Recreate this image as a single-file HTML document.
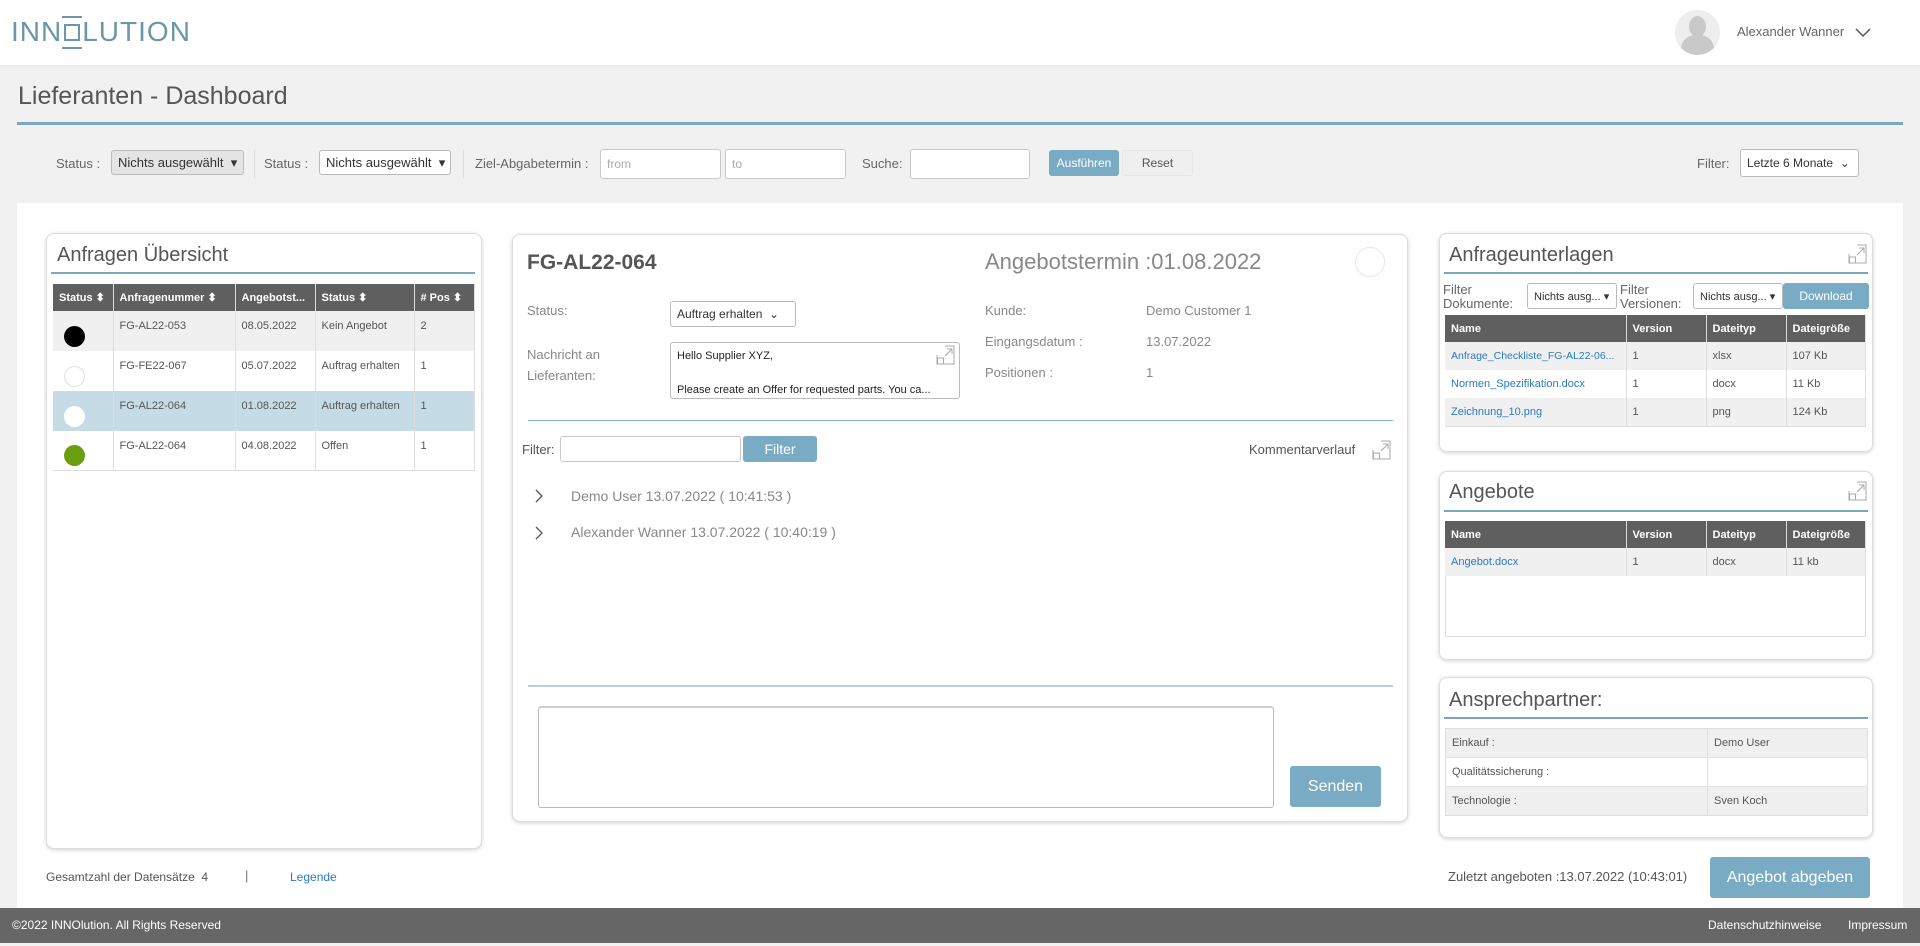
<!DOCTYPE html>
<html><head><meta charset="utf-8"><style>
*{box-sizing:border-box;margin:0;padding:0}
body{width:1920px;height:946px;background:#f1f1f1;font-family:"Liberation Sans",sans-serif;color:#555;position:relative;overflow:hidden}
.a{position:absolute}
.t{position:absolute;white-space:nowrap;line-height:1}
.panel{position:absolute;background:#fff;border:1px solid #ddd;border-radius:8px;box-shadow:0 1px 4px rgba(0,0,0,.18)}
.sel{position:absolute;background:#fff;border:1px solid #bbb;border-radius:3px;font-size:13px;color:#333;padding:0 6px;display:flex;align-items:center;white-space:nowrap}
.inp{position:absolute;background:#fff;border:1px solid #c8c8c8;border-radius:3px;font-size:12px;color:#aaa;padding:0 6px;display:flex;align-items:center}
.btn{position:absolute;background:#7aabc4;color:#fff;border-radius:3px;display:flex;align-items:center;justify-content:center;white-space:nowrap}
table{position:absolute;border-collapse:collapse;font-size:11px;table-layout:fixed}
th{background:#5f5f5f;color:#fff;text-align:left;font-weight:bold;padding:0 6px;border-right:1px solid #ddd;height:27px;white-space:nowrap;overflow:hidden}
td{padding:0 6px;border-right:1px solid #ddd;color:#555;vertical-align:middle;white-space:nowrap;overflow:hidden}
.ln{position:absolute;height:2px;background:#7aa9bd}
.exp{position:absolute;width:20px;height:20px}
a{color:#2a7ac0;text-decoration:none}
</style></head><body>
<div class="a" style="left:0;top:0;width:1920px;height:65px;background:#fff;box-shadow:0 1px 3px rgba(0,0,0,.06)"></div>
<div class="t" style="left:11px;top:18px;font-size:28px;color:#6b97a8;letter-spacing:1px">INN<span style="display:inline-block;width:16px;height:17px;border:2px solid #6b97a8;margin:0 2px;vertical-align:0px;position:relative"><span style="position:absolute;left:-4px;top:-10px;width:20px;height:33px;border:2px solid #6b97a8;border-left:none;border-right:none"></span></span>LUTION</div>
<div class="a" style="left:1675px;top:10px;width:45px;height:45px;border-radius:50%;background:#eee;overflow:hidden"><div class="a" style="left:14px;top:6px;width:17px;height:21px;border-radius:50%;background:#c9c9c9"></div><div class="a" style="left:6px;top:25px;width:33px;height:30px;border-radius:45% 45% 0 0;background:#c9c9c9"></div></div>
<div class="t" style="left:1737px;top:25px;font-size:13px;color:#666">Alexander Wanner</div>
<svg class="a" style="left:1855px;top:28px" width="16" height="10"><path d="M1 1 L8 8 L15 1" stroke="#555" stroke-width="1.5" fill="none"/></svg>
<div class="t" style="left:18px;top:84px;font-size:25px;color:#555">Lieferanten - Dashboard</div>
<div class="a" style="left:17px;top:122px;width:1886px;height:3px;background:#7aa9bd"></div>
<div class="t" style="left:56px;top:157px;font-size:13px;color:#666">Status :</div>
<div class="sel" style="left:111px;top:150px;width:133px;height:25px;background:#e4e4e4">Nichts ausgewählt &nbsp;▾</div>
<div class="a" style="left:254px;top:150px;width:1px;height:28px;background:#ddd"></div>
<div class="t" style="left:264px;top:157px;font-size:13px;color:#666">Status :</div>
<div class="sel" style="left:319px;top:150px;width:132px;height:25px">Nichts ausgewählt &nbsp;▾</div>
<div class="a" style="left:463px;top:150px;width:1px;height:28px;background:#ddd"></div>
<div class="t" style="left:475px;top:157px;font-size:13px;color:#666">Ziel-Abgabetermin :</div>
<div class="inp" style="left:600px;top:149px;width:121px;height:30px">from</div>
<div class="inp" style="left:725px;top:149px;width:121px;height:30px">to</div>
<div class="t" style="left:862px;top:157px;font-size:13px;color:#666">Suche:</div>
<div class="inp" style="left:910px;top:149px;width:120px;height:30px"></div>
<div class="btn" style="left:1049px;top:150px;width:70px;height:26px;font-size:12px">Ausführen</div>
<div class="a" style="left:1122px;top:150px;width:71px;height:26px;border:1px solid #e6e6e6;border-radius:3px;font-size:12px;color:#555;display:flex;align-items:center;justify-content:center;background:#efefef">Reset</div>
<div class="t" style="left:1697px;top:157px;font-size:13px;color:#666">Filter:</div>
<div class="sel" style="left:1740px;top:149px;width:119px;height:28px;font-size:12px">Letzte 6 Monate &nbsp;⌄</div>
<div class="a" style="left:17px;top:203px;width:1886px;height:705px;background:#fff"></div>

<div class="panel" style="left:46px;top:233px;width:436px;height:616px"></div>
<div class="t" style="left:57px;top:245px;font-size:20px;color:#555">Anfragen Übersicht</div>
<div class="ln" style="left:51px;top:272px;width:424px"></div>
<table style="left:53px;top:284px;width:422px">
<tr><th style="width:60px">Status ⬍</th><th style="width:122px">Anfragenummer ⬍</th><th style="width:80px">Angebotst...</th><th style="width:99px">Status ⬍</th><th>#&nbsp;Pos ⬍</th></tr>
<tr style="background:#f0f0f0;height:40px"><td><div style="width:21px;height:21px;border-radius:50%;background:#000;margin:10px 0 0 5px"></div></td><td style="vertical-align:top;padding-top:9px">FG-AL22-053</td><td style="vertical-align:top;padding-top:9px">08.05.2022</td><td style="vertical-align:top;padding-top:9px">Kein Angebot</td><td style="vertical-align:top;padding-top:9px">2</td></tr>
<tr style="background:#fff;height:40px"><td><div style="width:21px;height:21px;border-radius:50%;border:1px solid #ddd;margin:10px 0 0 5px"></div></td><td style="vertical-align:top;padding-top:9px">FG-FE22-067</td><td style="vertical-align:top;padding-top:9px">05.07.2022</td><td style="vertical-align:top;padding-top:9px">Auftrag erhalten</td><td style="vertical-align:top;padding-top:9px">1</td></tr>
<tr style="background:#c5dce6;height:40px"><td><div style="width:21px;height:21px;border-radius:50%;background:#fff;margin:10px 0 0 5px"></div></td><td style="vertical-align:top;padding-top:9px">FG-AL22-064</td><td style="vertical-align:top;padding-top:9px">01.08.2022</td><td style="vertical-align:top;padding-top:9px">Auftrag erhalten</td><td style="vertical-align:top;padding-top:9px">1</td></tr>
<tr style="background:#fff;height:39px;border-bottom:1px solid #ddd"><td><div style="width:21px;height:21px;border-radius:50%;background:#6a9e10;margin:10px 0 0 5px"></div></td><td style="vertical-align:top;padding-top:9px">FG-AL22-064</td><td style="vertical-align:top;padding-top:9px">04.08.2022</td><td style="vertical-align:top;padding-top:9px">Offen</td><td style="vertical-align:top;padding-top:9px">1</td></tr>
</table>
<div class="t" style="left:46px;top:871px;font-size:12px;color:#555">Gesamtzahl der Datensätze &nbsp;4</div>
<div class="t" style="left:245px;top:869px;font-size:13px;color:#777">|</div>
<div class="t" style="left:290px;top:871px;font-size:12px"><a>Legende</a></div>

<div class="panel" style="left:512px;top:234px;width:896px;height:588px"></div>
<div class="t" style="left:527px;top:252px;font-size:21px;color:#555;font-weight:600">FG-AL22-064</div>
<div class="t" style="left:985px;top:251px;font-size:22px;color:#888">Angebotstermin :01.08.2022</div>
<div class="a" style="left:1355px;top:247px;width:30px;height:30px;border-radius:50%;border:1px solid #e8e8e8"></div>
<div class="t" style="left:527px;top:304px;font-size:13px;color:#888">Status:</div>
<div class="sel" style="left:670px;top:301px;width:126px;height:26px;font-size:12px">Auftrag erhalten &nbsp;⌄</div>
<div class="t" style="left:527px;top:344px;font-size:13px;color:#888;line-height:21px">Nachricht an<br>Lieferanten:</div>
<div class="a" style="left:670px;top:342px;width:290px;height:57px;border:1px solid #bbb;border-radius:3px;font-size:11px;color:#222;padding:5px 6px;line-height:17px;white-space:nowrap">Hello Supplier XYZ,<br><br>Please create an Offer for requested parts. You ca...</div>
<svg class="exp" style="left:936px;top:345px" viewBox="0 0 20 20"><path d="M9 1H18V19H1V10" stroke="#aaa" fill="none"/><rect x="1.5" y="13" width="6" height="6" stroke="#aaa" fill="none"/><path d="M9 11L16 4M11 4H16V9" stroke="#aaa" fill="none"/></svg>
<div class="t" style="left:985px;top:304px;font-size:13px;color:#888">Kunde:</div>
<div class="t" style="left:1146px;top:304px;font-size:13px;color:#888">Demo Customer 1</div>
<div class="t" style="left:985px;top:335px;font-size:13px;color:#888">Eingangsdatum :</div>
<div class="t" style="left:1146px;top:335px;font-size:13px;color:#888">13.07.2022</div>
<div class="t" style="left:985px;top:366px;font-size:13px;color:#888">Positionen :</div>
<div class="t" style="left:1146px;top:366px;font-size:13px;color:#888">1</div>
<div class="a" style="left:528px;top:420px;width:865px;height:1px;background:#8ab5c6"></div>
<div class="t" style="left:522px;top:443px;font-size:13px;color:#555">Filter:</div>
<div class="inp" style="left:560px;top:436px;width:181px;height:26px"></div>
<div class="btn" style="left:743px;top:436px;width:74px;height:26px;font-size:14px">Filter</div>
<div class="t" style="left:1249px;top:443px;font-size:13px;color:#555">Kommentarverlauf</div>
<svg class="exp" style="left:1372px;top:440px" viewBox="0 0 20 20"><path d="M9 1H18V19H1V10" stroke="#aaa" fill="none"/><rect x="1.5" y="13" width="6" height="6" stroke="#aaa" fill="none"/><path d="M9 11L16 4M11 4H16V9" stroke="#aaa" fill="none"/></svg>
<svg class="a" style="left:534px;top:489px" width="10" height="14"><path d="M2 1L8 7L2 13" stroke="#555" stroke-width="1.3" fill="none"/></svg>
<div class="t" style="left:571px;top:489px;font-size:14px;color:#888">Demo User 13.07.2022 ( 10:41:53 )</div>
<svg class="a" style="left:534px;top:526px" width="10" height="14"><path d="M2 1L8 7L2 13" stroke="#555" stroke-width="1.3" fill="none"/></svg>
<div class="t" style="left:571px;top:525px;font-size:14px;color:#888">Alexander Wanner 13.07.2022 ( 10:40:19 )</div>
<div class="a" style="left:528px;top:685px;width:865px;height:2px;background:#b8d0da"></div>
<div class="a" style="left:538px;top:706px;width:736px;height:102px;border:1px solid #bbb;border-top:2px solid #ccc;border-radius:3px"></div>
<div class="btn" style="left:1290px;top:766px;width:91px;height:41px;font-size:16px">Senden</div>

<div class="panel" style="left:1439px;top:233px;width:434px;height:219px"></div>
<div class="t" style="left:1449px;top:245px;font-size:20px;color:#555">Anfrageunterlagen</div>
<svg class="exp" style="left:1848px;top:244px" viewBox="0 0 20 20"><path d="M9 1H18V19H1V10" stroke="#aaa" fill="none"/><rect x="1.5" y="13" width="6" height="6" stroke="#aaa" fill="none"/><path d="M9 11L16 4M11 4H16V9" stroke="#aaa" fill="none"/></svg>
<div class="ln" style="left:1444px;top:272px;width:424px"></div>
<div class="t" style="left:1443px;top:283px;font-size:13px;color:#666;line-height:14px">Filter<br>Dokumente:</div>
<div class="sel" style="left:1527px;top:283px;width:90px;height:26px;font-size:11px">Nichts ausg... ▾</div>
<div class="t" style="left:1620px;top:283px;font-size:13px;color:#666;line-height:14px">Filter<br>Versionen:</div>
<div class="sel" style="left:1693px;top:283px;width:90px;height:26px;font-size:11px">Nichts ausg... ▾</div>
<div class="btn" style="left:1783px;top:283px;width:86px;height:26px;font-size:12px">Download</div>
<table style="left:1445px;top:315px;width:421px">
<tr><th style="width:181px">Name</th><th style="width:80px">Version</th><th style="width:80px">Dateityp</th><th>Dateigröße</th></tr>
<tr style="background:#f0f0f0;height:28px"><td style="font-size:10.5px"><a>Anfrage_Checkliste_FG-AL22-06...</a></td><td>1</td><td>xlsx</td><td>107 Kb</td></tr>
<tr style="background:#fff;height:28px"><td><a>Normen_Spezifikation.docx</a></td><td>1</td><td>docx</td><td>11 Kb</td></tr>
<tr style="background:#f0f0f0;height:28px;border-bottom:1px solid #ddd"><td><a>Zeichnung_10.png</a></td><td>1</td><td>png</td><td>124 Kb</td></tr>
</table>

<div class="panel" style="left:1439px;top:471px;width:434px;height:189px"></div>
<div class="t" style="left:1449px;top:482px;font-size:20px;color:#555">Angebote</div>
<svg class="exp" style="left:1848px;top:481px" viewBox="0 0 20 20"><path d="M9 1H18V19H1V10" stroke="#aaa" fill="none"/><rect x="1.5" y="13" width="6" height="6" stroke="#aaa" fill="none"/><path d="M9 11L16 4M11 4H16V9" stroke="#aaa" fill="none"/></svg>
<div class="ln" style="left:1444px;top:510px;width:424px"></div>
<div class="a" style="left:1445px;top:521px;width:421px;height:116px;border:1px solid #ddd"></div>
<table style="left:1445px;top:521px;width:421px">
<tr><th style="width:181px">Name</th><th style="width:80px">Version</th><th style="width:80px">Dateityp</th><th>Dateigröße</th></tr>
<tr style="background:#f0f0f0;height:28px"><td><a>Angebot.docx</a></td><td>1</td><td>docx</td><td>11 kb</td></tr>
</table>

<div class="panel" style="left:1439px;top:677px;width:434px;height:161px"></div>
<div class="t" style="left:1449px;top:690px;font-size:20px;color:#555">Ansprechpartner:</div>
<div class="ln" style="left:1444px;top:717px;width:424px"></div>
<table style="left:1445px;top:728px;width:423px;border:1px solid #ddd">
<tr style="background:#f0f0f0;height:29px"><td style="width:262px;border-bottom:1px solid #e4e4e4">Einkauf :</td><td style="border-bottom:1px solid #e4e4e4">Demo User</td></tr>
<tr style="background:#fff;height:29px"><td style="border-bottom:1px solid #e4e4e4">Qualitätssicherung :</td><td style="border-bottom:1px solid #e4e4e4"></td></tr>
<tr style="background:#f0f0f0;height:29px"><td>Technologie :</td><td>Sven Koch</td></tr>
</table>
<div class="t" style="left:1448px;top:870px;font-size:13px;color:#555">Zuletzt angeboten :13.07.2022 (10:43:01)</div>
<div class="btn" style="left:1710px;top:857px;width:160px;height:41px;font-size:16px">Angebot abgeben</div>

<div class="a" style="left:0;top:908px;width:1920px;height:35px;background:#666"></div>
<div class="t" style="left:12px;top:919px;font-size:12px;color:#fff">©2022 INNOlution. All Rights Reserved</div>
<div class="t" style="left:1708px;top:919px;font-size:12px;color:#fff">Datenschutzhinweise</div>
<div class="t" style="left:1848px;top:919px;font-size:12px;color:#fff">Impressum</div>
</body></html>
